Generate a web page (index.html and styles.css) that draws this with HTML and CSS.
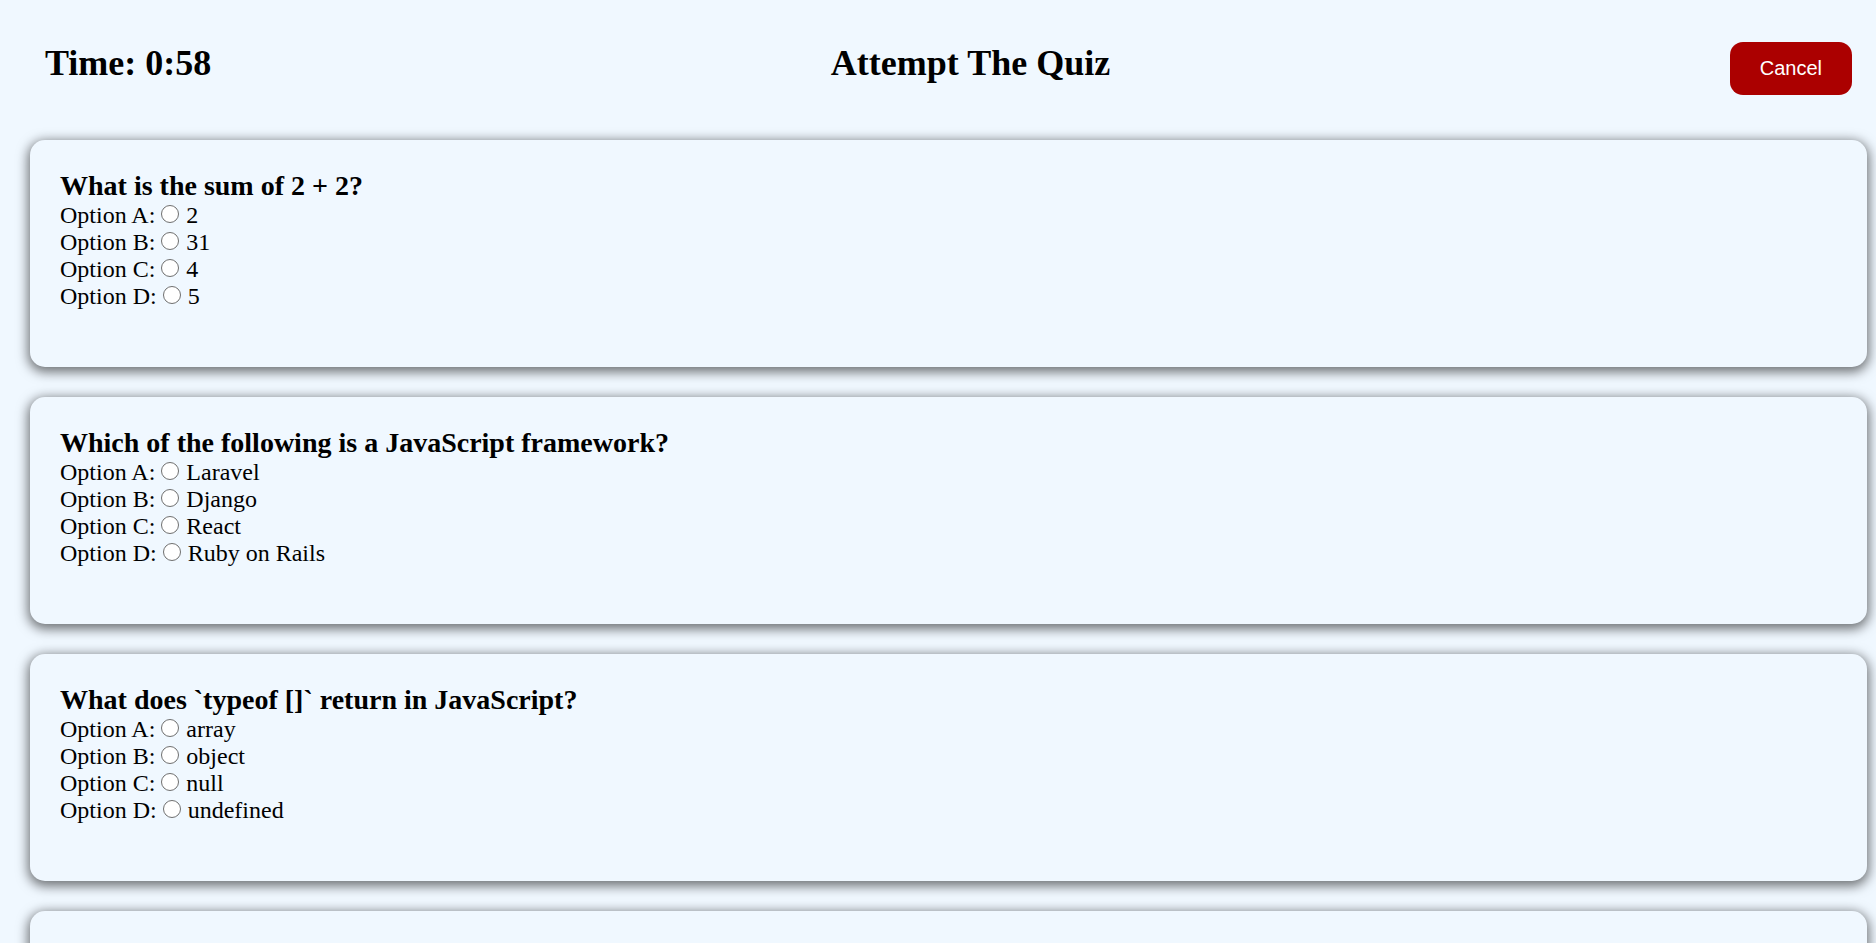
FILE: index.html
```html
<!DOCTYPE html>
<html lang="en">
<head>
<meta charset="utf-8">
<title>Attempt The Quiz</title>
<link rel="stylesheet" href="styles.css">
</head>
<body>
  <header class="quiz-header">
    <h2 class="timer">Time: 0:58</h2>
    <h2 class="title">Attempt The Quiz</h2>
    <button class="cancel-btn" type="button">Cancel</button>
  </header>

  <main class="questions">
    <section class="card">
      <h3 class="question">What is the sum of 2 + 2?</h3>
      <label class="option">Option A:<input type="radio" name="q1"> 2</label>
      <label class="option">Option B:<input type="radio" name="q1"> 31</label>
      <label class="option">Option C:<input type="radio" name="q1"> 4</label>
      <label class="option">Option D:<input type="radio" name="q1"> 5</label>
    </section>

    <section class="card">
      <h3 class="question">Which of the following is a JavaScript framework?</h3>
      <label class="option">Option A:<input type="radio" name="q2"> Laravel</label>
      <label class="option">Option B:<input type="radio" name="q2"> Django</label>
      <label class="option">Option C:<input type="radio" name="q2"> React</label>
      <label class="option">Option D:<input type="radio" name="q2"> Ruby on Rails</label>
    </section>

    <section class="card">
      <h3 class="question">What does `typeof []` return in JavaScript?</h3>
      <label class="option">Option A:<input type="radio" name="q3"> array</label>
      <label class="option">Option B:<input type="radio" name="q3"> object</label>
      <label class="option">Option C:<input type="radio" name="q3"> null</label>
      <label class="option">Option D:<input type="radio" name="q3"> undefined</label>
    </section>

    <section class="card">
      <h3 class="question">Which keyword declares a constant in JavaScript?</h3>
      <label class="option">Option A:<input type="radio" name="q4"> var</label>
      <label class="option">Option B:<input type="radio" name="q4"> let</label>
      <label class="option">Option C:<input type="radio" name="q4"> const</label>
      <label class="option">Option D:<input type="radio" name="q4"> static</label>
    </section>
  </main>
</body>
</html>
```

FILE: styles.css
```css
html, body {
  margin: 0;
  padding: 0;
  background: #f0f8ff;
}

body {
  font-family: "Liberation Serif", "Times New Roman", serif;
  color: #000;
  font-size: 24px;
}

.quiz-header {
  display: flex;
  justify-content: space-between;
  align-items: flex-start;
  padding: 42px 24px 0 45px;
}

.quiz-header h2 {
  margin: 0;
  font-size: 36px;
  font-weight: bold;
  line-height: normal;
}

.cancel-btn {
  font-family: "Liberation Sans", Arial, sans-serif;
  font-size: 20px;
  line-height: normal;
  color: #fff;
  background: #ab0000;
  border: none;
  border-radius: 13px;
  padding: 15px 30px;
  cursor: pointer;
}

.questions {
  display: flex;
  flex-direction: column;
  gap: 30px;
  margin: 45px 9px 0 30px;
}

.card {
  border-radius: 15px;
  padding: 30px 30px 57px;
  background: #f0f8ff;
  box-shadow: 0 3px 12px 2px rgba(0, 0, 0, 0.55);
}

.question {
  margin: 0;
  font-size: 28px;
  font-weight: bold;
  line-height: normal;
}

.option {
  display: block;
  line-height: normal;
}

.option input[type="radio"] {
  appearance: none;
  -webkit-appearance: none;
  box-sizing: border-box;
  width: 18px;
  height: 18px;
  margin: 3px 1px 0 6px;
  border: 1.5px solid #6f6f6f;
  border-radius: 50%;
  background: #fff;
}
```
